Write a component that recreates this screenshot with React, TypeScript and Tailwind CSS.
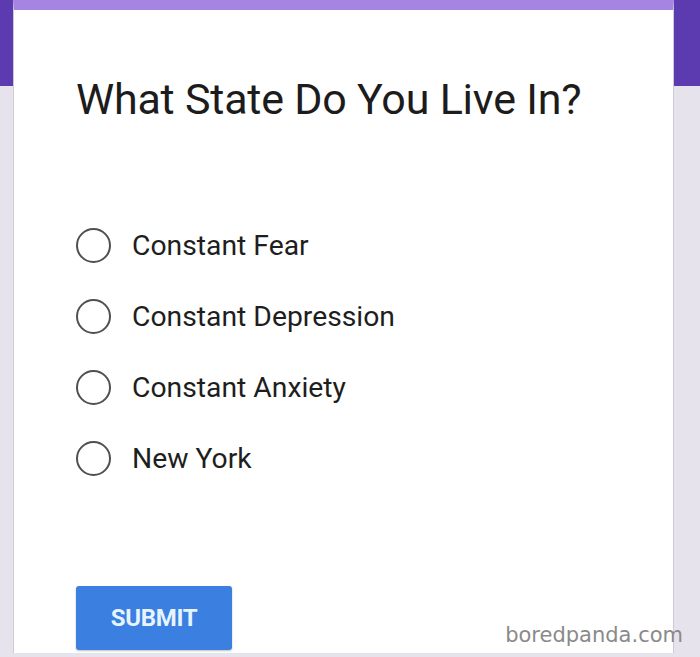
const options = ['Constant Fear', 'Constant Depression', 'Constant Anxiety', 'New York'];

function Radio() {
  return <span className="block h-[35px] w-[35px] shrink-0 rounded-full border-[2.5px] border-[#505050]" />;
}

export default function App() {
  return (
    <div
      className="relative h-[657px] w-[700px] overflow-hidden bg-[linear-gradient(to_bottom,#5c3ab0_86px,#e6e3ec_86px)]"
      style={{ fontFamily: 'Roboto, "Liberation Sans", sans-serif' }}
    >
      <div className="ml-[13px] flex h-[653px] w-[661px] flex-col border-t-[10px] border-l border-r border-[#a684e2] border-l-[#cfcbd6] border-r-[#cfcbd6] bg-white pl-[62px]">
        <h1 className="mt-[63px] text-[43px] leading-[52px] tracking-[-0.2px] text-[#1c1c1c]">What State Do You Live In?</h1>

        <div className="mt-[103px] flex flex-col gap-[36px]">
          {options.map((option) => (
            <label key={option} className="flex h-[35px] items-center gap-[21px]">
              <Radio />
              <span className="text-[28.3px] leading-[35px] text-[#1e1e1e]">{option}</span>
            </label>
          ))}
        </div>

        <button
          type="button"
          className="mt-[110px] flex h-[64px] w-[156px] items-center justify-center rounded-[3px] bg-[#3b7fe0] text-[24px] font-bold tracking-[-0.3px] text-[#e6f4ff] shadow-[0_1px_2px_rgba(0,0,0,0.25)]"
        >
          SUBMIT
        </button>
      </div>

      <span
        className="absolute right-[17px] bottom-[8px] text-[21px] leading-[28px] text-[#8a8a8a]"
        style={{ fontFamily: '"DejaVu Sans", sans-serif' }}
      >
        boredpanda.com
      </span>
    </div>
  );
}
